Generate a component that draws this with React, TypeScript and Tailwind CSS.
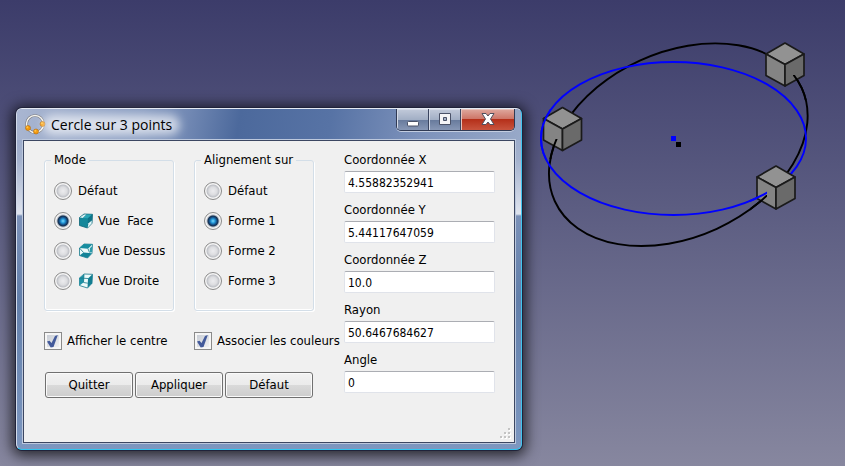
import React from "react";

type View = "front" | "top" | "right";

function CircleIcon() {
  return (
    <svg width="22" height="22" viewBox="0 0 22 22" aria-hidden="true">
      <circle cx="11" cy="10" r="8.5" fill="none" stroke="#77777c" strokeWidth="2.6" />
      <circle cx="11" cy="10" r="8.5" fill="none" stroke="#f4f4f0" strokeWidth="1.5" />
      {[[4, 14], [12, 17.5], [18.5, 10]].map(([x, y]) => (
        <g key={x}>
          <circle cx={x} cy={y} r="2.500" fill="#f59a0b" stroke="#b06a10" strokeWidth="0.6" />
          <circle cx={x - 0.6} cy={y - 0.7} r="1" fill="#ffc545" />
        </g>
      ))}
    </svg>
  );
}

function CubeIcon({ view }: { view: View }) {
  return (
    <svg width="16" height="16" viewBox="0 0 16 16" aria-hidden="true" strokeLinejoin="round">
      {view === "front" && (
        <>
          <path d="M1.500 4.500 6 1l8.500.3-.5 9L9.500 15l-8-2.500z" fill="#14879a" stroke="#0c6476" strokeWidth="0.8" />
          <path d="M1.800 4.500 6 1.400l2.500.2L5 5z" fill="#d9eef1" />
          <path d="M5 5l3.500-3.500 5.500.1L10 5.300z" fill="#2aa5b5" />
          <path d="M10 5.300 14 1.800l-.3 8.300-4.200 4.400z" fill="#0f7388" />
          <path d="M10.500 10.300 13.800 7.500l-.2 3-4 4.300z" fill="#e6f6f8" />
        </>
      )}
      {view === "top" && (
        <>
          <path d="M1.500 5 6 1l8.500.3-.5 9L9.500 15l-8-2.500z" fill="#eefafa" stroke="#15798a" strokeWidth="0.8" />
          <path d="M1.500 5 6 1l8.500.3L10 5.800z" fill="#178da0" />
          <path d="M1.500 12.500 5.500 9.500l8.500.7L9.500 15z" fill="#138398" />
          <path d="m10 5.800 1.500 3.700M1.500 5l4 4.500" fill="none" stroke="#15798a" strokeWidth="0.8" />
          <path d="M11.800 5.200 14.300 3l-.3 6-2.200.8z" fill="#2a99aa" />
        </>
      )}
      {view === "right" && (
        <>
          <path d="M1.500 5 6 1l8.500.3-.5 9L9.500 15l-8-2.500z" fill="#eefafa" stroke="#15798a" strokeWidth="0.8" />
          <path d="M1.500 5 6 1.500 5.500 9.500l-4 3z" fill="#1e92a6" />
          <path d="m10 5.500 4.500-4.200-.5 9L9.500 15z" fill="#127d91" />
          <path d="m5.500 9.500 4.300.7M1.500 5l8.500.5M6 1.300l-.5 8" fill="none" stroke="#15798a" strokeWidth="0.8" />
        </>
      )}
    </svg>
  );
}

function Radio({ name, label, view, checked }: { name: string; label: string; view?: View; checked?: boolean }) {
  return (
    <label className="flex h-[30px] items-center gap-1.5 whitespace-pre pl-[3px]">
      <input
        type="radio"
        name={name}
        defaultChecked={checked}
        className="size-[18px] shrink-0 appearance-none rounded-full border border-[#8a8a8a] bg-[radial-gradient(circle_at_50%_50%,#ececef_0,#dcdde0_4px,#bfc1c7_6px,#f5f5f5_7px)] checked:bg-[radial-gradient(circle_at_50%_50%,#7ed8f8_0,#249bdc_2px,#14477c_4px,#16304f_5px,#b5bcc6_6px,#f5f5f5_7px)]"
      />
      <span className="flex items-center gap-1">
        {view && <CubeIcon view={view} />}
        {label}
      </span>
    </label>
  );
}

function Group({ title, children }: { title: string; children: React.ReactNode }) {
  return (
    <fieldset className="min-w-0 rounded-[3px] border border-[#d3dee8] pb-3.5 pl-1.5 shadow-[inset_1px_0_#fff,inset_0_-1px_#fff,1px_1px_#fff]">
      <legend className="h-5 px-[3px] leading-5">{title}</legend>
      <div className="pt-1.5">{children}</div>
    </fieldset>
  );
}

function Check({ label }: { label: string }) {
  return (
    <label className="flex h-[30px] items-center gap-[5px] whitespace-nowrap">
      <span className="relative size-[18px] shrink-0">
        <input
          type="checkbox"
          defaultChecked
          className="peer block size-[18px] appearance-none border border-[#8a8a8a] bg-linear-to-br from-[#c4c9d2] to-[#f5f5f6] shadow-[inset_0_0_0_2px_#f6f6f6]"
        />
        <svg className="pointer-events-none absolute inset-0 hidden peer-checked:block" width="18" height="18" viewBox="0 0 18 18" aria-hidden="true">
          <path d="m3 9.500 2.500-.8 2 2.300L11 4l2.800-1-4.300 12-2.800.5z" fill="#42599a" />
        </svg>
      </span>
      {label}
    </label>
  );
}

function Field({ id, label, value }: { id: string; label: string; value: string }) {
  return (
    <div>
      <label htmlFor={id} className="block h-[21px] leading-5">{label}</label>
      <input
        id={id}
        type="text"
        defaultValue={value}
        className="block h-[22px] w-full rounded-xs border border-[#e0e3ea] border-t-[#abadb3] bg-white px-[3px] pt-px text-xs outline-none"
      />
    </div>
  );
}

function PushButton({ children }: { children: string }) {
  return (
    <button
      type="button"
      className="h-[26px] rounded-[3px] border border-[#707070] bg-[linear-gradient(#f2f2f2_0,#ebebeb_50%,#dadada_50%,#cdcdcd_100%)] shadow-[inset_0_0_0_1px_#fafafa]"
    >
      {children}
    </button>
  );
}

function Cube({ x, y }: { x: number; y: number }) {
  return (
    <g transform={`translate(${x} ${y})`} stroke="#1a1a1a" strokeWidth="1.700" strokeLinejoin="round">
      <path d="M0 0 19 11 0 21.500-19 11z" fill="#929292" />
      <path d="M-19 11 0 21.500V43L-19 32.500z" fill="#848484" />
      <path d="M19 11 0 21.500V43L19 32.500z" fill="#6a6a6a" />
    </g>
  );
}

function BlueCircle({ clip }: { clip?: string }) {
  return (
    <g clipPath={clip}>
      <ellipse cx="673.5" cy="138.5" rx="132.5" ry="76.5" fill="none" stroke="#0000ff" strokeWidth="1.900" />
    </g>
  );
}

function BlackCircle({ clip }: { clip?: string }) {
  return (
    <g clipPath={clip}>
      <ellipse cx="678.300" cy="144.700" rx="135.800" ry="92.500" transform="rotate(-24.600 678.300 144.700)" fill="none" stroke="#000" strokeWidth="1.900" />
    </g>
  );
}

function Scene() {
  return (
    <svg className="absolute left-[530px] top-[30px]" width="300" height="230" viewBox="530 30 300 230" aria-hidden="true">
      <clipPath id="blueFront">
        <rect x="535" y="90" width="15" height="70" />
        <rect x="750" y="185" width="17" height="20" />
      </clipPath>
      <clipPath id="blackFront">
        <rect x="540" y="139" width="18" height="20" />
        <rect x="793" y="75" width="20" height="25" />
        <rect x="750" y="195" width="17" height="20" />
      </clipPath>
      <BlackCircle />
      <BlueCircle />
      <Cube x={562.5} y={107.5} />
      <Cube x={785} y={43} />
      <Cube x={776} y={166} />
      <BlackCircle clip="url(#blackFront)" />
      <BlueCircle clip="url(#blueFront)" />
      <rect x="671" y="136" width="5" height="5" fill="#0000ff" />
      <rect x="676" y="142" width="5" height="5" fill="#000" />
    </svg>
  );
}

function WindowControls() {
  const normal = "bg-[linear-gradient(#c2cada_0,#a2afc5_50%,#66799b_50%,#8797b5_100%)]";
  return (
    <div className="mr-1.5 flex h-[22px] overflow-hidden rounded-b-[5px] border border-t-0 border-[#303a54] shadow-[0_1px_#c3cde0]">
      <button type="button" aria-label="Réduire" className={`flex w-8 items-center justify-center border-r border-[#3a4560] shadow-[inset_1px_1px_#d5dbe8] ${normal}`}>
        <svg width="14" height="16" viewBox="0 0 14 16"><rect x="1.500" y="9.500" width="11" height="4.500" rx="1" fill="#fff" stroke="#4a5268" /></svg>
      </button>
      <button type="button" aria-label="Agrandir" className={`flex w-8 items-center justify-center border-r border-[#3a4560] shadow-[inset_1px_1px_#d5dbe8] ${normal}`}>
        <svg width="14" height="16" viewBox="0 0 14 16"><path fillRule="evenodd" d="M1.500 1.500h11v11h-11zM5.500 5.500v3h3v-3z" fill="#f5f5f7" stroke="#4a5268" /></svg>
      </button>
      <button type="button" aria-label="Fermer" className="flex w-[53px] items-center justify-center bg-[linear-gradient(#dfa99f_0,#cd7466_48%,#b5301a_50%,#c8543e_100%)] shadow-[inset_1px_1px_#e8c3bc]">
        <svg width="16" height="16" viewBox="0 0 16 16"><path d="M2 1.500h4L8 4l2-2.500h4L10.500 7l3.500 5.500h-4L8 10l-2 2.500H2L5.500 7z" fill="#fff" stroke="#50505e" strokeLinejoin="round" /></svg>
      </button>
    </div>
  );
}

function SizeGrip() {
  return (
    <svg className="absolute bottom-0.5 right-0.5" width="12" height="12" viewBox="0 0 12 12" aria-hidden="true">
      {[[8, 0], [4, 4], [8, 4], [0, 8], [4, 8], [8, 8]].map(([x, y]) => (
        <g key={`${x}-${y}`}>
          <rect x={x + 1} y={y + 1} width="2" height="2" fill="#fff" />
          <rect x={x} y={y} width="2" height="2" fill="#c4c4c4" />
        </g>
      ))}
    </svg>
  );
}

export default function App() {
  return (
    <main className="relative min-h-screen overflow-hidden bg-linear-to-b from-[#3c3c6a] to-[#87879f] font-['DejaVu_Sans_Condensed','DejaVu_Sans',sans-serif] text-[13px] text-black">
      <Scene />
      <section
        aria-label="Cercle sur 3 points"
        className="absolute left-4 top-[108px] w-[506px] rounded-[6px] border border-t-[#e4e9f3] border-r-[#42c4ee] border-b-[#30c5f0] border-l-[#d3dbea] bg-[linear-gradient(#92a4c6_0,#a3b1cd_50px,#dfe4ee_105px,#7b91b8_107px,#627faa_190px,#7d97c0_100%)] shadow-[0_0_0_1px_#20233a,0_2px_14px_4px_rgba(0,0,0,0.700)]"
      >
        <header className="flex h-[31px] items-start justify-between rounded-t-[5px] bg-[linear-gradient(100deg,#a9b6d1_0,#8b9ec2_25%,#7188b3_34%,#4c699c_44%,#5773a5_62%,#7d92bb_80%,#98a9c8_100%)]">
          <div className="flex h-8 items-center gap-[5px] pl-[7px]">
            <CircleIcon />
            <h1 className="relative font-['Open_Sans','Noto_Sans',sans-serif] text-sm">
              <span className="absolute -inset-x-2 inset-y-0 rounded-full bg-white/65 blur-[5px]" />
              <span className="relative">Cercle sur 3 points</span>
            </h1>
          </div>
          <WindowControls />
        </header>
        <form className="relative mx-1.5 mb-1.5 flex gap-[30px] border border-[#3c4762] bg-[#f0f0f0] pb-[44px] pl-5 pr-[19px] pt-[9px] shadow-[0_0_0_1px_#bcc8dd]">
          <div className="w-[270px]">
            <div className="grid grid-cols-[130px_120px] gap-5">
              <Group title="Mode">
                <Radio name="mode" label="Défaut" />
                <Radio name="mode" label="Vue  Face" view="front" checked />
                <Radio name="mode" label="Vue Dessus" view="top" />
                <Radio name="mode" label="Vue Droite" view="right" />
              </Group>
              <Group title="Alignement sur">
                <Radio name="align" label="Défaut" />
                <Radio name="align" label="Forme 1" checked />
                <Radio name="align" label="Forme 2" />
                <Radio name="align" label="Forme 3" />
              </Group>
            </div>
            <div className="mt-[15px] grid grid-cols-[130px_120px] gap-5">
              <Check label="Afficher le centre" />
              <Check label="Associer les couleurs" />
            </div>
            <div className="mt-4 grid grid-cols-3 gap-0.5 px-px">
              <PushButton>Quitter</PushButton>
              <PushButton>Appliquer</PushButton>
              <PushButton>Défaut</PushButton>
            </div>
          </div>
          <div className="flex min-w-0 flex-1 flex-col gap-[7px]">
            <Field id="x" label="Coordonnée X" value="4.55882352941" />
            <Field id="y" label="Coordonnée Y" value="5.44117647059" />
            <Field id="z" label="Coordonnée Z" value="10.0" />
            <Field id="radius" label="Rayon" value="50.6467684627" />
            <Field id="angle" label="Angle" value="0" />
          </div>
          <SizeGrip />
        </form>
      </section>
    </main>
  );
}
